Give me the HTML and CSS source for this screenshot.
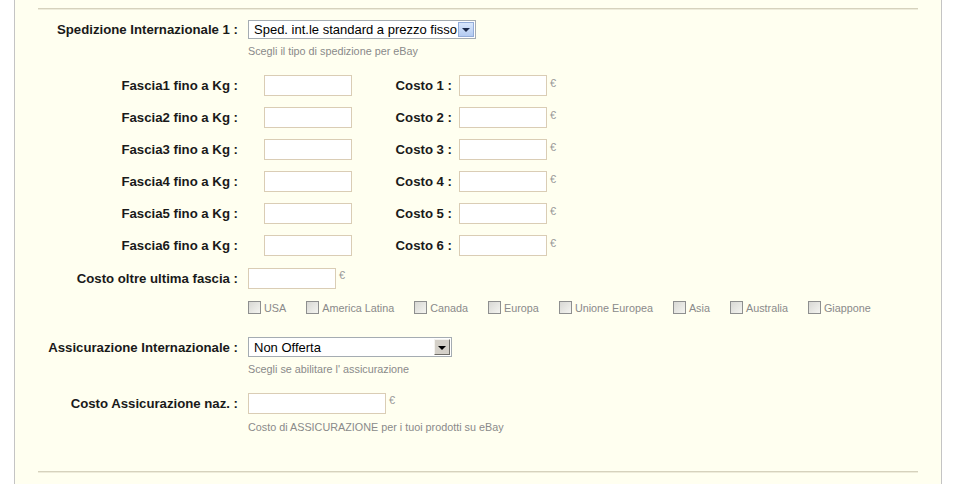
FILE: index.html
```html
<!DOCTYPE html>
<html>
<head>
<meta charset="utf-8">
<link rel="stylesheet" href="styles.css">
</head>
<body>
<div class="panel">
  <div class="rule"></div>

  <div class="row">
    <div class="label">Spedizione Internazionale 1 :</div>
    <div class="select select-focus">
      <span class="select-text">Sped. int.le standard a prezzo fisso</span>
      <span class="arrow arrow-blue"><i class="tri"></i></span>
    </div>
  </div>
  <div class="hint">Scegli il tipo di spedizione per eBay</div>

  <div class="fascia">
    <div class="label">Fascia1 fino a Kg :</div><div class="input w88 end"></div><div class="label label-costo">Costo 1 :</div><div class="input w88 end"></div><div class="euro">€</div>
    <div class="label">Fascia2 fino a Kg :</div><div class="input w88 end"></div><div class="label label-costo">Costo 2 :</div><div class="input w88 end"></div><div class="euro">€</div>
    <div class="label">Fascia3 fino a Kg :</div><div class="input w88 end"></div><div class="label label-costo">Costo 3 :</div><div class="input w88 end"></div><div class="euro">€</div>
    <div class="label">Fascia4 fino a Kg :</div><div class="input w88 end"></div><div class="label label-costo">Costo 4 :</div><div class="input w88 end"></div><div class="euro">€</div>
    <div class="label">Fascia5 fino a Kg :</div><div class="input w88 end"></div><div class="label label-costo">Costo 5 :</div><div class="input w88 end"></div><div class="euro">€</div>
    <div class="label">Fascia6 fino a Kg :</div><div class="input w88 end"></div><div class="label label-costo">Costo 6 :</div><div class="input w88 end"></div><div class="euro">€</div>
  </div>

  <div class="row row-input oltre">
    <div class="label">Costo oltre ultima fascia :</div>
    <div class="input w88 ctrl"></div><div class="euro">€</div>
  </div>

  <div class="checks">
    <label class="check"><span class="box"></span>USA</label>
    <label class="check"><span class="box"></span>America Latina</label>
    <label class="check"><span class="box"></span>Canada</label>
    <label class="check"><span class="box"></span>Europa</label>
    <label class="check"><span class="box"></span>Unione Europea</label>
    <label class="check"><span class="box"></span>Asia</label>
    <label class="check"><span class="box"></span>Australia</label>
    <label class="check"><span class="box"></span>Giappone</label>
  </div>

  <div class="row row-sel2">
    <div class="label">Assicurazione Internazionale :</div>
    <div class="select select-plain">
      <span class="select-text">Non Offerta</span>
      <span class="arrow arrow-gray"><i class="tri tri-black"></i></span>
    </div>
  </div>
  <div class="hint">Scegli se abilitare l' assicurazione</div>

  <div class="row row-input assic">
    <div class="label">Costo Assicurazione naz. :</div>
    <div class="input w138 ctrl"></div><div class="euro">€</div>
  </div>
  <div class="hint hint-last">Costo di ASSICURAZIONE per i tuoi prodotti su eBay</div>

  <div class="rule rule-bottom"></div>
</div>
</body>
</html>
```

FILE: styles.css
```css
body {
  margin: 0;
  background: #ffffff;
  font-family: "Liberation Sans", Arial, sans-serif;
}

.panel {
  margin-left: 14px;
  width: 928px;
  height: 484px;
  box-sizing: border-box;
  border-left: 1px solid #c4c4c4;
  border-right: 1px solid #c4c4c4;
  background: #fffff0;
  padding-top: 8px;
}

.rule {
  margin: 0 23px;
  border-top: 1px solid #d6d2bd;
  border-bottom: 1px solid #eeecda;
}

.rule-bottom {
  margin-top: 37px;
}

.row {
  display: flex;
  align-items: center;
  height: 19px;
  margin-top: 10px;
}

.label {
  width: 223px;
  flex: none;
  text-align: right;
  font-weight: bold;
  font-size: 13.2px;
  color: #1a1a1a;
  white-space: nowrap;
}

.fascia .label-costo {
  width: auto;
}

.hint {
  margin: 6px 0 0 233px;
  font-size: 10.8px;
  line-height: 13px;
  color: #8a8a8a;
}

.select {
  margin-left: 10px;
  display: flex;
  align-items: center;
  justify-content: space-between;
  box-sizing: border-box;
  background: #ffffff;
  font-size: 13px;
  color: #000;
}

.select-focus {
  width: 228px;
  height: 19px;
  border: 1px solid #a5acb2;
}

.select-plain {
  width: 204px;
  height: 20px;
  border: 1px solid #a5acb2;
}

.select-text {
  padding-left: 5px;
  white-space: nowrap;
}

.arrow {
  flex: none;
  box-sizing: border-box;
  display: flex;
  align-items: center;
  justify-content: center;
  margin-right: 1px;
}

.arrow-blue {
  width: 16px;
  height: 15px;
  background: linear-gradient(#d9e7fc, #b4cbf1);
  border: 1px solid #93acd8;
}

.arrow-gray {
  width: 16px;
  height: 16px;
  background: #d4d0c8;
  border: 1px solid;
  border-color: #f4f3ef #6e6c66 #6e6c66 #f4f3ef;
}

.tri {
  width: 0;
  height: 0;
  border-left: 4px solid transparent;
  border-right: 4px solid transparent;
  border-top: 4px solid #1c2a4a;
  margin-top: 1px;
}

.tri-black {
  border-top-color: #000;
}

.fascia {
  display: grid;
  grid-template-columns: 223px 114px 100px 95px auto;
  grid-auto-rows: 21px;
  row-gap: 11px;
  align-items: center;
  margin-top: 17px;
}

.input {
  box-sizing: border-box;
  height: 21px;
  background: #ffffff;
  border: 1px solid #dacdb5;
}

.w88 { width: 88px; }
.w138 { width: 138px; }

.end { justify-self: end; }

.ctrl { margin-left: 10px; }

.euro {
  margin-left: 3px;
  font-size: 11px;
  color: #9a9a9a;
  align-self: start;
  margin-top: 2px;
}

.row-input {
  height: 21px;
}

.row-input .euro {
  align-self: flex-start;
  margin-top: 1px;
}

.oltre { margin-top: 12px; }

.checks {
  display: flex;
  align-items: center;
  gap: 20px;
  height: 13px;
  margin-top: 12px;
  padding-left: 233px;
}

.check {
  display: flex;
  align-items: center;
  font-size: 10.8px;
  color: #8a8a8a;
  white-space: nowrap;
}

.box {
  width: 13px;
  height: 13px;
  box-sizing: border-box;
  margin-right: 3px;
  border: 1px solid #8e8f8f;
  background: linear-gradient(135deg, #d8d8d4, #f4f4f0);
}

.row-sel2 {
  height: 20px;
  margin-top: 23px;
}

.assic { margin-top: 17px; }

.hint-last { margin-top: 7px; }
```
